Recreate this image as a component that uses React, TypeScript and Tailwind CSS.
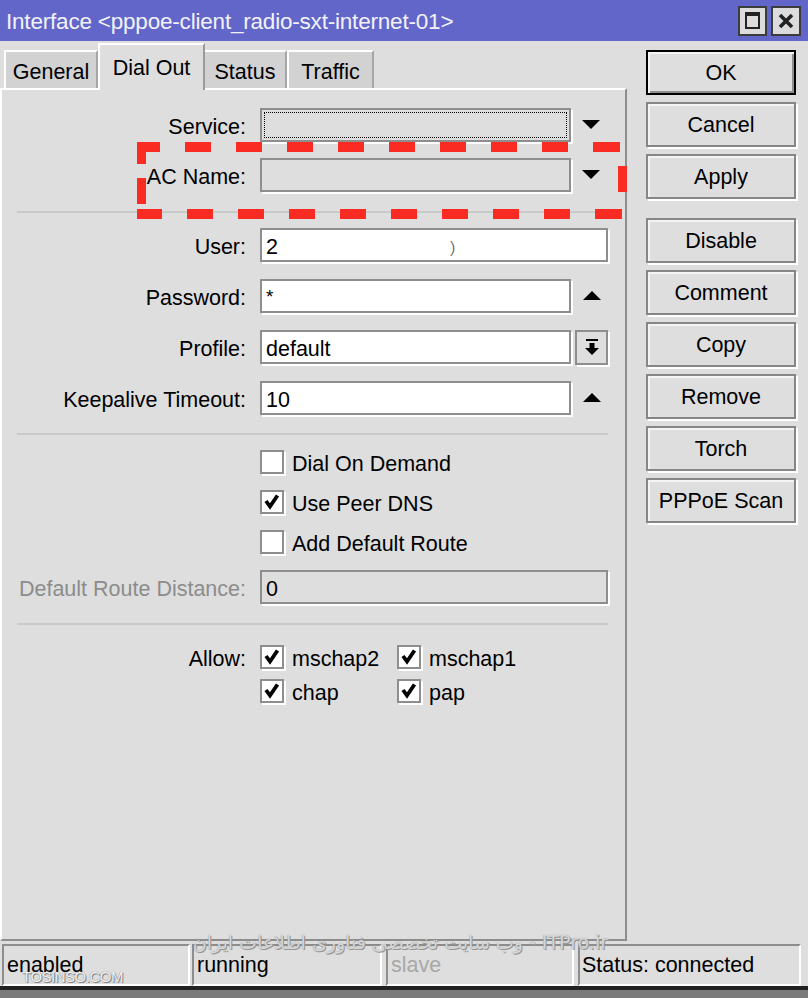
import React from "react";

const Down = () => (
  <svg width="18" height="10" viewBox="0 0 18 10">
    <polygon points="0,0 18,0 9,9" fill="#000" />
  </svg>
);
const Up = () => (
  <svg width="18" height="10" viewBox="0 0 18 10">
    <polygon points="0,9 18,9 9,0" fill="#000" />
  </svg>
);

const Check = () => (
  <svg width="20" height="20" viewBox="0 0 20 20">
    <path d="M4 9 L8 14.5 L15.5 3.5" stroke="#000" strokeWidth="3.8" fill="none" />
  </svg>
);

function Checkbox({ checked }: { checked?: boolean }) {
  return (
    <div className="w-[24px] h-[24px] bg-white border-2 border-[#8e8e8e] shadow-[2px_2px_0_#ffffff] flex items-center justify-center shrink-0">
      {checked ? <Check /> : null}
    </div>
  );
}

function Field({
  label,
  children,
  mt,
  disabledLabel,
}: {
  label: string;
  children: React.ReactNode;
  mt: string;
  disabledLabel?: boolean;
}) {
  return (
    <div className={`flex items-center h-[34px] ${mt}`}>
      <div
        className={`w-[244px] text-right leading-none pt-[6px] ${disabledLabel ? "text-[#8c8c8c]" : "text-black"}`}
      >
        {label}
      </div>
      <div className="ml-[14px] flex items-center h-full">{children}</div>
    </div>
  );
}

function Box({
  w,
  children,
  disabled,
  dotted,
}: {
  w: string;
  children?: React.ReactNode;
  disabled?: boolean;
  dotted?: boolean;
}) {
  return (
    <div
      className={`${w} h-[34px] border-2 border-[#8e8e8e] shadow-[2px_2px_0_#ffffff] flex items-center pl-[4px] pt-[5px] leading-none ${
        disabled ? "bg-[#dedede]" : dotted ? "bg-[#dedede]" : "bg-white"
      } ${dotted ? "outline-1 outline-dotted outline-black outline-offset-[-5px]" : ""}`}
    >
      {children}
    </div>
  );
}

function Sep({ mt }: { mt: string }) {
  return <div className={`${mt} ml-[15px] w-[591px] h-[2px] bg-[#c9c9c9]`} />;
}

function Btn({ label, primary, mt }: { label: string; primary?: boolean; mt: string }) {
  return (
    <div
      className={`${mt} w-[150px] h-[45px] flex items-center justify-center bg-[#dedede] leading-none pt-[3px] ${
        primary
          ? "border-2 border-black shadow-[inset_2px_2px_0_#f4f4f4,inset_-2px_-2px_0_#8e8e8e]"
          : "border-2 border-[#868686] shadow-[inset_2px_2px_0_#f4f4f4,2px_2px_0_#ffffff]"
      }`}
    >
      {label}
    </div>
  );
}

const dashes: [number, number, number, number][] = [
  // top
  [137, 142, 23, 10],
  [185, 142, 26, 10],
  [236, 142, 26, 10],
  [287, 142, 26, 10],
  [338, 142, 26, 10],
  [389, 142, 26, 10],
  [440, 142, 26, 10],
  [491, 142, 26, 10],
  [542, 142, 26, 10],
  [593, 142, 27, 10],
  // bottom
  [137, 209, 25, 10],
  [187, 209, 26, 10],
  [238, 209, 26, 10],
  [289, 209, 26, 10],
  [340, 209, 26, 10],
  [391, 209, 26, 10],
  [442, 209, 26, 10],
  [493, 209, 26, 10],
  [544, 209, 26, 10],
  [595, 209, 27, 10],
  // left
  [137, 142, 9, 22],
  [137, 178, 9, 26],
  // right
  [618, 166, 9, 26],
];

function CheckRow({ checked, label, mt }: { checked?: boolean; label: string; mt: string }) {
  return (
    <div className={`${mt} ml-[258px] flex items-center h-[24px] gap-[8px] leading-none`}>
      <Checkbox checked={checked} />
      <span className="pt-[5px]">{label}</span>
    </div>
  );
}

function SmallCheck({ label }: { label: string }) {
  return (
    <div className="flex items-center h-[24px] gap-[8px]">
      <Checkbox checked />
      <span className="pt-[5px]">{label}</span>
    </div>
  );
}

export default function App() {
  return (
    <div className="relative w-[808px] h-[998px] bg-[#dedede] overflow-hidden font-['Liberation_Sans',Arial,sans-serif] text-[21.5px] text-black">
      {/* Title bar */}
      <div className="h-[41px] bg-[#6266c9] flex items-center pl-[6px] pr-[7px]">
        <div className="text-[22.5px] text-[#f2f2fa] leading-none tracking-[-0.2px] pt-[3px]">
          Interface &lt;pppoe-client_radio-sxt-internet-01&gt;
        </div>
        <div className="ml-auto flex items-center gap-[4px]">
          <div className="w-[29px] h-[30px] bg-[#dcdcdc] border-2 border-[#3c3c3c] flex items-center justify-center">
            <div className="w-[15px] h-[17px] border-2 border-t-[4px] border-[#222]" />
          </div>
          <div className="w-[30px] h-[30px] bg-[#dcdcdc] border-2 border-[#3c3c3c] flex items-center justify-center">
            <svg width="16" height="16" viewBox="0 0 16 16">
              <path d="M2 2 L14 14 M14 2 L2 14" stroke="#222" strokeWidth="3.6" />
            </svg>
          </div>
        </div>
      </div>

      {/* Main */}
      <div className="flex h-[900px]">
        <div className="w-[627px] flex flex-col">
          {/* Tabs */}
          <div className="h-[47px] flex items-end pl-[4px]">
            <div className="w-[94px] h-[38px] bg-[#d2d2d2] border-t-2 border-l-2 border-white border-r-2 border-r-[#a6a6a6] flex items-center justify-center leading-none pt-[5px]">
              General
            </div>
            <div className="relative z-10 w-[107px] h-[47px] -mb-[2px] bg-[#dedede] border-t-2 border-l-2 border-white border-r-2 border-r-[#9a9a9a] flex items-start justify-center leading-none pt-[13px]">
              Dial Out
            </div>
            <div className="w-[82px] h-[38px] bg-[#d2d2d2] border-t-2 border-white border-r-2 border-r-[#a6a6a6] flex items-center justify-center leading-none pt-[5px]">
              Status
            </div>
            <div className="w-[87px] h-[38px] bg-[#d2d2d2] border-t-2 border-l-2 border-white border-r-2 border-r-[#a6a6a6] flex items-center justify-center leading-none pt-[5px]">
              Traffic
            </div>
          </div>

          {/* Panel */}
          <div className="h-[853px] border-2 border-t-white border-l-white border-r-[#8d8d8d] border-b-[#8d8d8d] flex flex-col">
            <Field label="Service:" mt="mt-[18px]">
              <Box w="w-[311px]" dotted />
              <div className="ml-[11px]">
                <Down />
              </div>
            </Field>
            <Field label="AC Name:" mt="mt-[16px]">
              <Box w="w-[311px]" disabled />
              <div className="ml-[11px]">
                <Down />
              </div>
            </Field>
            <Sep mt="mt-[19px]" />
            <Field label="User:" mt="mt-[15px]">
              <Box w="w-[348px]">
                <span>2</span>
                <span className="ml-[172px] text-[#777] text-[16px]">)</span>
              </Box>
            </Field>
            <Field label="Password:" mt="mt-[17px]">
              <Box w="w-[311px]">
                <span className="text-[19px] -mt-[4px]">*</span>
              </Box>
              <div className="ml-[12px]">
                <Up />
              </div>
            </Field>
            <Field label="Profile:" mt="mt-[17px]">
              <Box w="w-[311px]">default</Box>
              <div className="ml-[4px] w-[33px] h-[35px] border-2 border-[#8e8e8e] bg-[#dedede] shadow-[2px_2px_0_#ffffff] flex items-center justify-center">
                <svg width="14" height="17" viewBox="0 0 14 17">
                  <rect x="1" y="0" width="12" height="2" fill="#000" />
                  <rect x="4.5" y="4" width="5" height="5" fill="#000" />
                  <polygon points="0,9 14,9 7,16" fill="#000" />
                </svg>
              </div>
            </Field>
            <Field label="Keepalive Timeout:" mt="mt-[17px]">
              <Box w="w-[311px]">10</Box>
              <div className="ml-[12px]">
                <Up />
              </div>
            </Field>
            <Sep mt="mt-[18px]" />

            <CheckRow label="Dial On Demand" mt="mt-[15px]" />
            <CheckRow label="Use Peer DNS" checked mt="mt-[16px]" />
            <CheckRow label="Add Default Route" mt="mt-[16px]" />

            <Field label="Default Route Distance:" mt="mt-[16px]" disabledLabel>
              <Box w="w-[348px]" disabled>
                0
              </Box>
            </Field>
            <Sep mt="mt-[19px]" />

            <div className="mt-[20px] flex leading-none">
              <div className="w-[244px] h-[24px] flex items-center justify-end pt-[5px]">Allow:</div>
              <div className="ml-[14px] grid grid-cols-[137px_auto] gap-y-[10px]">
                <SmallCheck label="mschap2" />
                <SmallCheck label="mschap1" />
                <SmallCheck label="chap" />
                <SmallCheck label="pap" />
              </div>
            </div>
          </div>
        </div>

        {/* Buttons */}
        <div className="ml-[19px] flex flex-col">
          <Btn label="OK" primary mt="mt-[9px]" />
          <Btn label="Cancel" mt="mt-[7px]" />
          <Btn label="Apply" mt="mt-[7px]" />
          <Btn label="Disable" mt="mt-[19px]" />
          <Btn label="Comment" mt="mt-[7px]" />
          <Btn label="Copy" mt="mt-[7px]" />
          <Btn label="Remove" mt="mt-[7px]" />
          <Btn label="Torch" mt="mt-[7px]" />
          <Btn label="PPPoE Scan" mt="mt-[7px]" />
        </div>
      </div>

      {/* Status bar */}
      <div className="mt-[3px] h-[42px] flex leading-none">
        <div className="ml-[2px] w-[188px] h-full border-2 border-t-[#8d8d8d] border-l-[#8d8d8d] border-b-white border-r-white flex items-end pb-[8px] pl-[3px]">
          enabled
        </div>
        <div className="ml-[2px] w-[190px] h-full border-2 border-t-[#8d8d8d] border-l-[#8d8d8d] border-b-white border-r-white flex items-end pb-[8px] pl-[3px]">
          running
        </div>
        <div className="ml-[4px] w-[188px] h-full border-2 border-t-[#8d8d8d] border-l-[#8d8d8d] border-b-white border-r-white flex items-end pb-[8px] pl-[3px] text-[#a8a8a8]">
          slave
        </div>
        <div className="ml-[4px] w-[223px] h-full border-2 border-t-[#8d8d8d] border-l-[#8d8d8d] border-b-white border-r-white flex items-end pb-[8px] pl-[2px]">
          Status: connected
        </div>
      </div>
      <div className="h-[4px] bg-[#222]" />
      <div className="h-[8px] bg-[#7b7b7b]" />

      {/* Red dashed annotation */}
      <svg className="absolute left-0 top-0 pointer-events-none" width="808" height="300">
        {dashes.map(([x, y, w, h], i) => (
          <rect key={i} x={x} y={y} width={w} height={h} fill="#f92b22" />
        ))}
      </svg>

      {/* Watermarks */}
      <div
        dir="rtl"
        className="absolute left-[196px] top-[933px] w-[412px] text-right font-['DejaVu_Sans',sans-serif] text-[19px] text-[#eeeeee]/80 [text-shadow:0_0_1px_#777,1px_1px_0_#999] leading-none whitespace-nowrap"
      >
        ITPro.ir - وب سایت تخصصی فناوری اطلاعات ایران
      </div>
      <div className="absolute left-[22px] top-[969px] font-['Liberation_Sans',sans-serif] text-[15px] tracking-[-0.5px] text-[#f4f4f4] [text-shadow:0_0_1px_#666,1px_1px_0_#888] leading-none">
        TOSINSO.COM
      </div>
    </div>
  );
}
